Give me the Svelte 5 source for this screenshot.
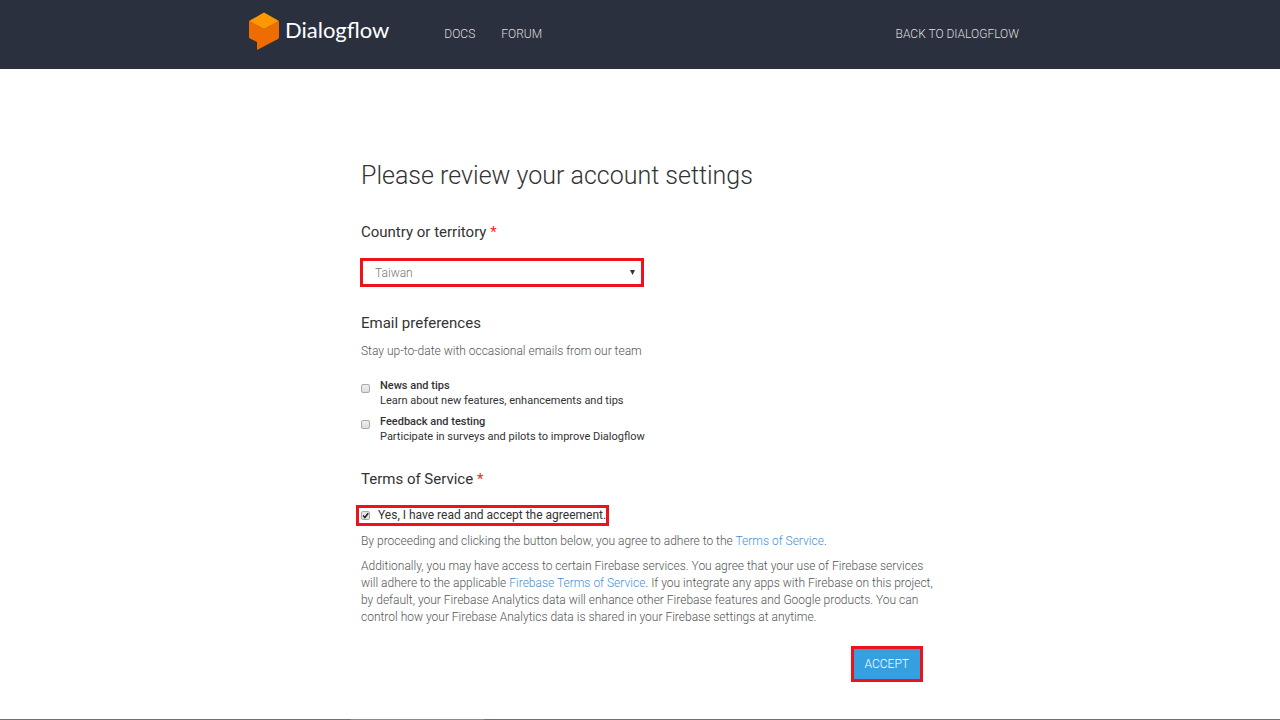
<script lang="ts">
	const countries = ['Taiwan', 'Japan', 'Singapore', 'United States'];

	const preferences = [
		{
			id: 'news',
			title: 'News and tips',
			text: 'Learn about new features, enhancements and tips'
		},
		{
			id: 'feedback',
			title: 'Feedback and testing',
			text: 'Participate in surveys and pilots to improve Dialogflow'
		}
	];

	let country = $state('Taiwan');
	let selected = $state<string[]>([]);
	let accepted = $state(true);
</script>

<div class="page">
	<header>
		<div class="bar">
			<a class="logo" href="#home">
				<svg width="30" height="38" viewBox="0 0 30 38" aria-hidden="true">
					<path d="M0 9 15 17 30 9V25Q30 26 29 27L9 37.5Q8 38 8 37V30L1 26.5Q0 26 0 25Z" fill="#ef6c00" />
					<path d="M14 1Q15 0 16 1L30 9 15 17 0 9Z" fill="#ff9800" />
				</svg>
				<span>Dialogflow</span>
			</a>
			<nav>
				<a href="#docs">DOCS</a>
				<a href="#forum">FORUM</a>
				<a class="back" href="#back">BACK TO DIALOGFLOW</a>
			</nav>
		</div>
	</header>

	<main>
		<h1>Please review your account settings</h1>

		<form onsubmit={(e) => e.preventDefault()}>
			<section>
				<label class="title" for="country">Country or territory <b>*</b></label>
				<div class="select marked">
					<select id="country" bind:value={country}>
						{#each countries as name (name)}
							<option value={name}>{name}</option>
						{/each}
					</select>
					<svg width="5" height="5" viewBox="0 0 6 6" aria-hidden="true">
						<path d="M0 0H6L3 6Z" fill="#333" />
					</svg>
				</div>
			</section>

			<section class="email">
				<h2 class="title">Email preferences</h2>
				<p>Stay up-to-date with occasional emails from our team</p>
				{#each preferences as item (item.id)}
					<div class="preference">
						<input id={item.id} type="checkbox" value={item.id} bind:group={selected} />
						<label for={item.id}>
							<strong>{item.title}</strong>
							<span>{item.text}</span>
						</label>
					</div>
				{/each}
			</section>

			<section class="terms">
				<h2 class="title">Terms of Service <b>*</b></h2>
				<div class="agreement marked">
					<input id="agreement" type="checkbox" bind:checked={accepted} />
					<label for="agreement">Yes, I have read and accept the agreement.</label>
				</div>
				<p>
					By proceeding and clicking the button below, you agree to adhere to the
					<a href="#terms">Terms of Service</a>.
				</p>
				<p>
					Additionally, you may have access to certain Firebase services. You agree that your use of
					Firebase services will adhere to the applicable
					<a href="#firebase">Firebase Terms of Service</a>. If you integrate any apps with Firebase
					on this project, by default, your Firebase Analytics data will enhance other Firebase
					features and Google products. You can control how your Firebase Analytics data is shared in
					your Firebase settings at anytime.
				</p>
			</section>

			<button class="marked" type="submit">ACCEPT</button>
		</form>
	</main>

	<div class="edge"></div>
</div>

<style>
	:global(body) {
		background: #fff;
	}

	.page {
		display: flex;
		flex-direction: column;
		min-height: 100vh;
		font-family: Roboto, 'Open Sans', sans-serif;
		font-size: 12px;
		color: #333;
	}

	header {
		background: #2b303f;
	}

	.bar {
		display: flex;
		box-sizing: border-box;
		max-width: 782px;
		height: 69px;
		margin: 0 auto;
		padding-right: 12px;
	}

	.logo {
		display: flex;
		gap: 6px;
		padding-top: 12px;
		color: #fff;
		font-family: Lato, sans-serif;
		font-size: 22px;
		line-height: 36px;
		text-decoration: none;
	}

	nav {
		display: flex;
		flex: 1;
		gap: 26px;
		margin-left: 55px;
		line-height: 68px;
	}

	nav a {
		color: #ddd;
		font-weight: 300;
		text-decoration: none;
	}

	.back {
		margin-left: auto;
	}

	main {
		box-sizing: border-box;
		width: 100%;
		max-width: 566px;
		margin: 0 auto;
		padding: 89px 0 30px 4px;
	}

	h1 {
		margin: 0 0 28px;
		font-size: 25px;
		font-weight: 300;
		line-height: 36px;
	}

	form {
		display: flex;
		flex-direction: column;
	}

	.title {
		display: block;
		margin: 0;
		font-size: 15px;
		font-weight: 400;
		line-height: 20px;
	}

	.title b {
		color: #f22;
		font-weight: 400;
	}

	.marked {
		border: 3px solid #ee121b;
	}

	.select {
		position: relative;
		box-sizing: border-box;
		width: 284px;
		margin: 16px 0 0 -1px;
	}

	select {
		display: block;
		width: 100%;
		height: 23px;
		padding: 0 12px;
		border: 0;
		appearance: none;
		background: #fff;
		color: #777;
		font: 300 12px Roboto, sans-serif;
	}

	.select svg {
		position: absolute;
		top: 9px;
		right: 6px;
		pointer-events: none;
	}

	.email {
		margin-top: 26px;
	}

	.terms {
		margin-top: 20px;
	}

	/* text runs a little past the button's right edge */
	p {
		margin: 8px -16px 8px 0;
		color: #555;
		font-weight: 300;
		line-height: 17px;
	}

	p a {
		color: #4a8fd4;
		text-decoration: none;
	}

	.email p {
		margin-top: 10px;
		margin-bottom: 18px;
	}

	.preference {
		display: flex;
		gap: 10px;
		margin-bottom: 6px;
		font-size: 11px;
		line-height: 15px;
	}

	.preference:last-child {
		margin-bottom: 5px;
	}

	.preference input {
		margin-top: 6px;
	}

	.preference strong,
	.preference span {
		display: block;
	}

	.preference strong {
		font-weight: 500;
	}

	input {
		flex: none;
		width: 9px;
		height: 9px;
		margin: 0;
		border: 1px solid #aaa;
		border-radius: 2px;
		appearance: none;
		background: linear-gradient(#eee, #ddd);
	}

	input:checked {
		background: url("data:image/svg+xml,%3Csvg xmlns='http://www.w3.org/2000/svg' viewBox='0 0 9 9'%3E%3Cpath d='M1.5 4.5 3.7 7 8 1.5' fill='none' stroke='%23222' stroke-width='2'/%3E%3C/svg%3E") #e6e6e6;
	}

	.agreement {
		display: flex;
		align-items: center;
		gap: 8px;
		box-sizing: border-box;
		width: fit-content;
		margin: 16px 0 0 -5px;
		padding-left: 2px;
		line-height: 15px;
	}

	.agreement + p {
		margin-top: 7px;
	}

	button {
		align-self: flex-end;
		height: 36px;
		margin-top: 12px;
		padding: 0 11px;
		background: #369fe0;
		color: #fff;
		font: 300 12px Roboto, sans-serif;
	}

	.edge {
		height: 1px;
		margin-top: auto;
		background: linear-gradient(90deg, #7f6e5f 351px, #a98550 351px 484px, #7f6e5f 484px);
	}
</style>
